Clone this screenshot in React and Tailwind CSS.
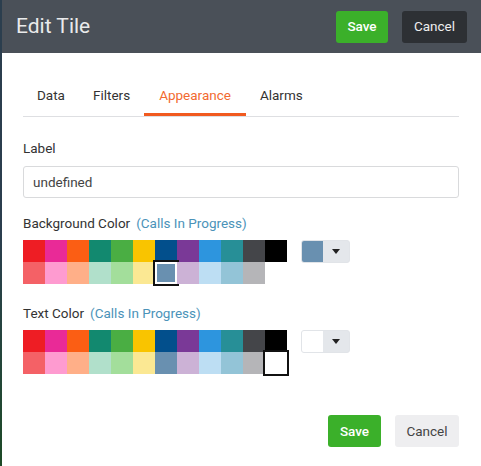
const row1 = [
  '#ee1d24', '#e92a97', '#fb5e14', '#12896f', '#4aae43', '#f9c400',
  '#024f8c', '#7a3997', '#2d95de', '#278f97', '#444549', '#000000',
]
const row2 = [
  '#f46166', '#fe9bd0', '#ffaf88', '#b1e0cb', '#a3de9b', '#fbe893',
  '#6990b0', '#ccb2d6', '#bddef3', '#93c4d7', '#b5b5b8',
]

function Swatch({ color, selected }) {
  return (
    <div className="relative h-[22px] w-[22px]" style={{ backgroundColor: color }}>
      {selected && (
        <div
          className="absolute -left-[2px] -top-[2px] h-[26px] w-[26px] border-2 border-[#111] shadow-[inset_0_0_0_2px_#fff]"
          style={{ backgroundColor: color }}
        />
      )}
    </div>
  )
}

function ColorPicker({ title, selected, value }) {
  return (
    <div>
      <div className="text-[13.5px] leading-[20px] text-[#333]">
        {title}
        <span className="ml-[6px] text-[#4b93b9]">(Calls In Progress)</span>
      </div>
      <div className="mt-[7px] flex items-start gap-[14px]">
        <div className="grid grid-cols-[repeat(12,22px)]">
          {row1.map((c) => (
            <Swatch key={'a' + c} color={c} />
          ))}
          {row2.map((c) => (
            <Swatch key={'b' + c} color={c} selected={selected === c} />
          ))}
          <div className="relative h-[22px] w-[22px]">
            {selected === 'white' && (
              <div className="absolute -left-[2px] -top-[2px] h-[26px] w-[26px] border-2 border-[#111] bg-white" />
            )}
          </div>
        </div>

        {/* dropdown */}
        <div className="flex h-[23px] w-[49px] overflow-hidden rounded-[3px] border border-[#e1e4e8] bg-[#e4e7eb]">
          <div className="w-[21px]" style={{ backgroundColor: value }} />
          <div className="flex flex-1 items-center justify-center">
            <svg width="8" height="5" viewBox="0 0 8 5">
              <path d="M0 0 L8 0 L4 5 Z" fill="#222" />
            </svg>
          </div>
        </div>
      </div>
    </div>
  )
}

export default function App() {
  const tabs = ['Data', 'Filters', 'Appearance', 'Alarms']

  return (
    <div className="flex h-[466px] w-[481px] bg-white font-['Roboto',sans-serif]">
      <div className="w-[2px] bg-gradient-to-b from-[#2b3e4e] via-[#2b3e4e] to-[#1d4a26]" />

      <div className="flex flex-1 flex-col">
        {/* header */}
        <div className="flex h-[53px] items-center bg-[#4a5058] pl-[14px] pr-[14px]">
          <span className="text-[21px] text-[#e9eaeb]">Edit Tile</span>
          <div className="ml-auto flex gap-[14px]">
            <button className="h-[32px] w-[52px] rounded-[3px] bg-[#3bb02a] text-[13.5px] font-medium text-white">
              Save
            </button>
            <button className="h-[32px] w-[65px] rounded-[3px] bg-[#2d3034] text-[13.5px] text-[#eee]">
              Cancel
            </button>
          </div>
        </div>

        <div className="flex flex-1 flex-col pl-[21px] pr-[22px]">
          {/* tabs */}
          <div className="mt-[22px] flex border-b border-[#dedfe2]">
            {tabs.map((t) => (
              <div
                key={t}
                className={
                  t === 'Appearance'
                    ? 'border-b-[3px] border-[#f15a1f] px-[15px] pb-[8px] pt-[10px] text-[13.5px] leading-[20px] text-[#f26a30]'
                    : 'border-b-[3px] border-transparent px-[14px] pb-[8px] pt-[10px] text-[13.5px] leading-[20px] text-[#333]'
                }
              >
                {t}
              </div>
            ))}
          </div>

          {/* label */}
          <div className="mt-[21px] text-[13.5px] leading-[20px] text-[#333]">Label</div>
          <div className="mt-[8px] flex h-[32px] items-center rounded-[3px] border border-[#d9dadc] px-[9px] text-[13.5px] text-[#444]">
            undefined
          </div>

          <div className="mt-[15px]">
            <ColorPicker title="Background Color" selected="#6990b0" value="#6990b0" />
          </div>
          <div className="mt-[19px]">
            <ColorPicker title="Text Color" selected="white" value="#ffffff" />
          </div>

          {/* footer */}
          <div className="mt-[41px] flex justify-end gap-[14px]">
            <button className="h-[32px] w-[53px] rounded-[3px] bg-[#3bb02a] text-[13.5px] font-medium text-white">
              Save
            </button>
            <button className="h-[32px] w-[64px] rounded-[3px] bg-[#eeeef0] text-[13.5px] text-[#444]">
              Cancel
            </button>
          </div>
        </div>
      </div>
    </div>
  )
}
